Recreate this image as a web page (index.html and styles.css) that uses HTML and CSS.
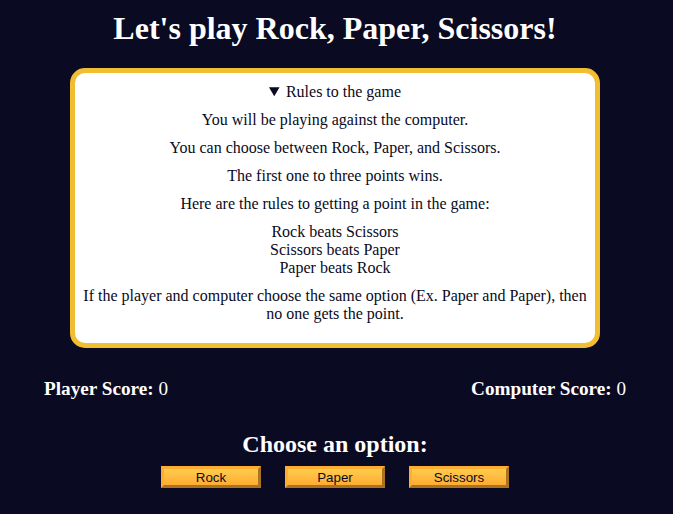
FILE: index.html
```html
<!DOCTYPE html>
<html lang="en">
<head>
<meta charset="utf-8">
<title>Rock, Paper, Scissors</title>
<link rel="stylesheet" href="styles.css">
</head>
<body>
<h1 class="title">Let's play Rock, Paper, Scissors!</h1>
<details class="rules-container" open>
  <summary class="rules-summary">Rules to the game</summary>
  <p class="rule">You will be playing against the computer.</p>
  <p class="rule">You can choose between Rock, Paper, and Scissors.</p>
  <p class="rule">The first one to three points wins.</p>
  <p class="rule">Here are the rules to getting a point in the game:</p>
  <ul class="rules-list">
    <li>Rock beats Scissors</li>
    <li>Scissors beats Paper</li>
    <li>Paper beats Rock</li>
  </ul>
  <p class="rule">If the player and computer choose the same option (Ex. Paper and Paper), then no one gets the point.</p>
</details>
<div class="score-container">
  <strong class="score">Player Score: <span class="score-num">0</span></strong>
  <strong class="score">Computer Score: <span class="score-num">0</span></strong>
</div>
<section class="options-container">
  <h2 class="options-title">Choose an option:</h2>
  <div class="btn-container">
    <button class="btn">Rock</button>
    <button class="btn">Paper</button>
    <button class="btn">Scissors</button>
  </div>
</section>
</body>
</html>
```
FILE: styles.css
```css
html, body {
  margin: 0;
  padding: 0;
}
body {
  background-color: #0a0a23;
  color: #ffffff;
  font-family: "Liberation Serif", "Times New Roman", serif;
  text-align: center;
  padding-right: 3px;
}
.title {
  font-size: 32px;
  margin: 10px 0 21px;
  line-height: 37px;
}
.rules-container {
  box-sizing: border-box;
  width: 530px;
  margin: 0 auto;
  padding: 10px 0;
  background-color: #ffffff;
  color: #0a0a23;
  border: 5px solid #f1be32;
  border-radius: 15px;
  font-size: 16px;
  line-height: 18px;
}
.rules-summary {
  cursor: pointer;
}
.rule {
  margin: 10px 0;
}
.rules-list {
  list-style: none;
  margin: 10px 0;
  padding: 0;
}
.score-container {
  display: flex;
  justify-content: space-between;
  padding: 0 44px 0 44px;
  margin-top: 30px;
  font-size: 19.2px;
  line-height: 22px;
}
.score-num {
  font-weight: normal;
}
.options-container {
  margin-top: 30px;
}
.options-title {
  font-size: 24px;
  line-height: 28px;
  margin: 0;
}
.btn-container {
  margin-top: -2px;
}
.btn {
  cursor: pointer;
  box-sizing: border-box;
  width: 100px;
  height: 22px;
  margin: 10px;
  padding: 0 6px;
  font-family: "Liberation Sans", Arial, sans-serif;
  font-size: 13.33px;
  color: #0a0a23;
  background-color: #feac32;
  background-image: linear-gradient(#fecc4c, #ffac33);
  border: 3px outset #feac32;
}
```
